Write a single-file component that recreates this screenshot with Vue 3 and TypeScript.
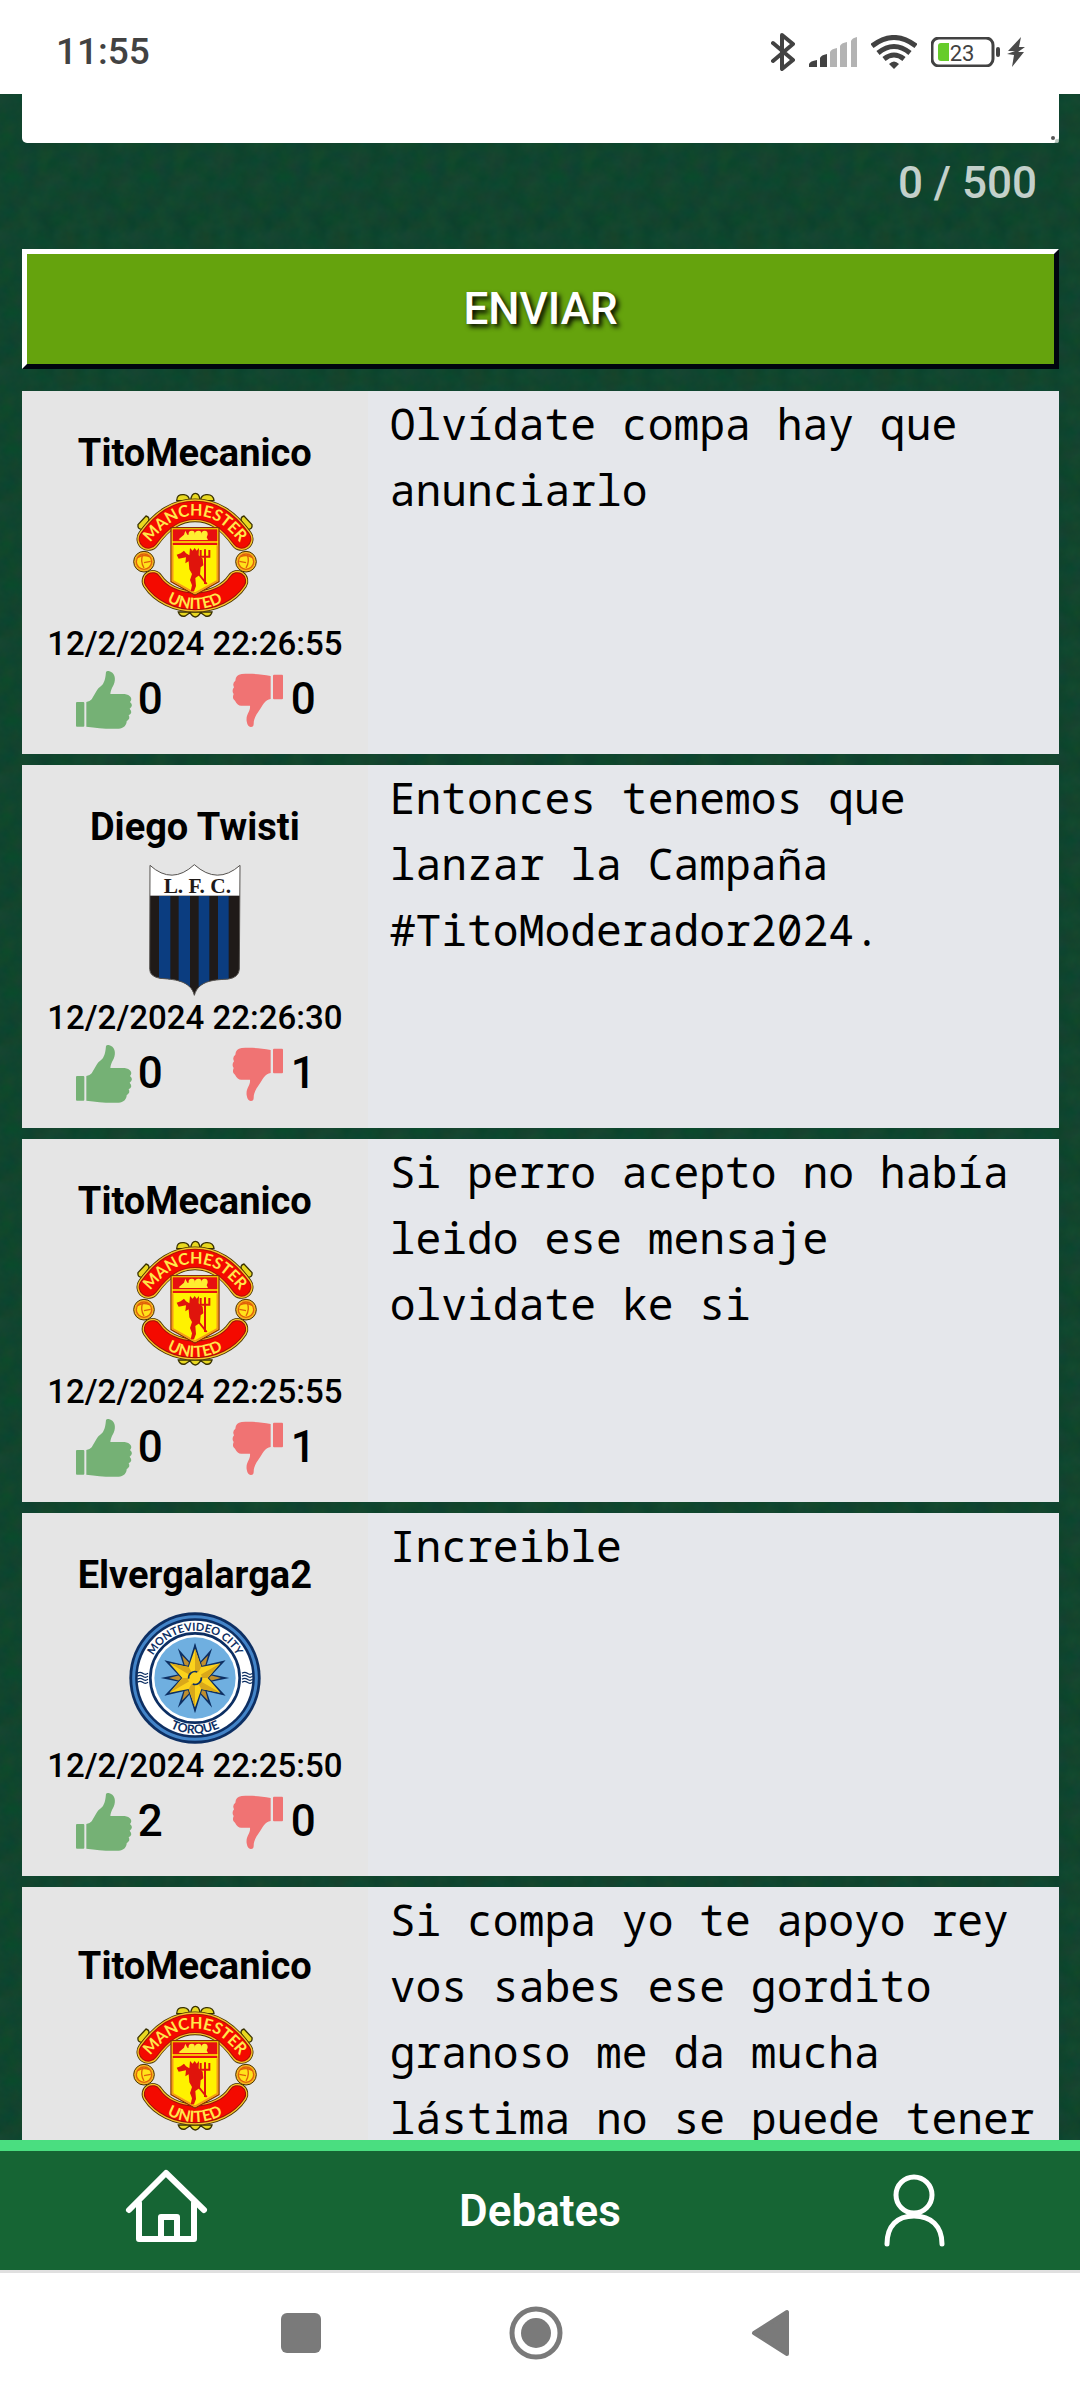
<script setup lang="ts">
import { ref } from 'vue'

interface Comment {
  id: number
  author: string
  crest: 'united' | 'liverpool' | 'torque'
  date: string
  likes: number
  dislikes: number
  text: string
  long?: boolean
}

const maxLength = 500
const draft = ref('')

const comments = ref<Comment[]>([
  { id: 1, author: 'TitoMecanico', crest: 'united', date: '12/2/2024 22:26:55', likes: 0, dislikes: 0, text: 'Olvídate compa hay que anunciarlo' },
  { id: 2, author: 'Diego Twisti', crest: 'liverpool', date: '12/2/2024 22:26:30', likes: 0, dislikes: 1, text: 'Entonces tenemos que lanzar la Campaña #TitoModerador2024.' },
  { id: 3, author: 'TitoMecanico', crest: 'united', date: '12/2/2024 22:25:55', likes: 0, dislikes: 1, text: 'Si perro acepto no había leido ese mensaje olvidate ke si' },
  { id: 4, author: 'Elvergalarga2', crest: 'torque', date: '12/2/2024 22:25:50', likes: 2, dislikes: 0, text: 'Increible' },
  { id: 5, author: 'TitoMecanico', crest: 'united', date: '', likes: 0, dislikes: 0, text: 'Si compa yo te apoyo rey vos sabes ese gordito granoso me da mucha lástima no se puede tener', long: true },
])

const ribbonTop = 'M115 177 C158 118 200 91 255 91 S352 118 395 177'
const ribbonBottom = 'M128 303 C152 340 200 364 255 364 S358 340 382 303'
const shield =
  'M90 46 Q156 106 223 44 Q292 106 360 46 L358 358 Q356 382 326 387 C290 390 236 388 223 436 C212 390 158 388 120 385 Q90 380 89 358Z'

// Points of a star centred on (255, 234), the middle of the Torque badge
function star(count: number, outer: number, inner: number): string {
  const points: string[] = []
  for (let i = 0; i < count * 2; i++) {
    const r = i % 2 === 0 ? outer : inner
    const a = ((i * 180) / count) * (Math.PI / 180)
    points.push(`${(255 + r * Math.sin(a)).toFixed(1)},${(234 - r * Math.cos(a)).toFixed(1)}`)
  }
  return points.join(' ')
}
</script>

<template>
  <div class="screen">
    <svg class="sprites" width="0" height="0" aria-hidden="true">
      <symbol id="like" viewBox="0 0 186 186">
        <rect x="6" y="102" width="25" height="74" rx="3" />
        <path d="M37 102 Q48 101 53 94 L68 68 C76 56 84 54 88 46 Q94 36 96 12 Q98 8 104 9 C122 13 127 32 119 50 Q109 68 109 78 H152 C168 80 178 92 168 102 Q180 112 167 122 Q178 134 164 142 Q170 152 158 160 C158 172 148 182 134 182 C96 184 70 179 37 176Z" />
      </symbol>
      <symbol id="dislike" viewBox="0 0 186 186">
        <rect x="138" y="20" width="30" height="74" rx="3" />
        <path d="M131 24 C100 17 70 17 44 18 Q26 20 25 38 Q15 46 21 58 Q13 68 20 78 Q14 92 24 98 Q32 114 44 113 H69 C71 132 56 138 59 160 Q62 178 72 177 Q80 177 80 168 C80 148 90 138 100 122 C110 108 114 96 131 93Z" />
      </symbol>
    </svg>

    <header class="status">
      <time class="clock">11:55</time>
      <div class="indicators" aria-hidden="true">
        <svg width="24" height="38" viewBox="0 0 24 38" fill="none" stroke="#424242" stroke-width="4" stroke-linejoin="round" stroke-linecap="round">
          <path d="M2 10 L22 27 L11 36 V2 L22 11 L2 28" />
        </svg>
        <svg width="48" height="30" viewBox="0 0 48 30">
          <path d="M0 30 V27 Q1 24 8 23 V30Z M11 30 V21 Q12 18 18 17 V30Z" fill="#424242" />
          <path d="M21 30 V15 Q22 12 28 11 V30Z M31 30 V9 Q32 6 38 5 V30Z M42 30 V4 Q43 1 48 0 V30Z" fill="#b3b3b3" />
        </svg>
        <svg width="46" height="34" viewBox="0 0 46 34" fill="none" stroke="#424242" stroke-width="5">
          <path d="M1 11 Q23 -6 45 11 M7 18 Q23 5 39 18 M13 24 Q23 16 33 24" />
          <path d="M23 34 L18 29 Q23 24 28 29Z" fill="#424242" stroke="none" />
        </svg>
        <svg width="94" height="30" viewBox="0 0 94 30">
          <rect x="1" y="1" width="61" height="28" rx="7" fill="none" stroke="#424242" stroke-width="3" />
          <path d="M10 6 H18 V24 H10 Q7 24 7 21 V9 Q7 6 10 6Z" fill="#66cc2b" />
          <rect x="65" y="10" width="4" height="10" rx="2" fill="#424242" />
          <text x="31" y="24" text-anchor="middle" font-family="Roboto, sans-serif" font-size="22" font-weight="400" fill="#424242">23</text>
          <path d="M90 0 L77 14 H84 L76 17 L83 18 L81 30 L93 15 H87 L94 10 L88 10Z" fill="#4a4a4a" />
        </svg>
      </div>
    </header>

    <main class="feed">
      <form class="composer" @submit.prevent>
        <div class="field">
          <textarea v-model="draft" :maxlength="maxLength" aria-label="Comentario"></textarea>
          <svg class="grip" width="9" height="9" viewBox="0 0 9 9" aria-hidden="true">
            <circle cx="3" cy="4" r="2" fill="#555" />
            <circle cx="7" cy="7" r="2" fill="#b9c9c1" />
          </svg>
        </div>
        <p class="counter">{{ draft.length }} / {{ maxLength }}</p>
        <button class="send" type="submit">ENVIAR</button>
      </form>

      <article v-for="c in comments" :key="c.id" class="comment" :class="{ long: c.long }">
        <aside class="meta">
          <h2>{{ c.author }}</h2>

          <svg v-if="c.crest === 'united'" class="crest" viewBox="57 30 396 396">
            <g fill="#e8d820" stroke="#3a3200" stroke-width="4">
              <path d="M200 62 Q200 42 222 44 Q238 46 238 62Z" />
              <path d="M272 62 Q272 46 288 44 Q310 42 312 62Z" />
              <path d="M242 60 Q245 40 256 40 Q268 40 270 60Z" />
              <path d="M84 134 L108 108 Q122 112 114 126 L96 148 Q82 148 84 134Z" />
              <path d="M426 134 L402 108 Q388 112 396 126 L414 148 Q428 148 426 134Z" />
              <path d="M205 396 Q210 412 226 408 L240 398 Q256 424 272 398 L286 408 Q302 412 306 396Z" />
            </g>
            <g fill="none" stroke-linecap="round">
              <path :d="ribbonTop" stroke="#4a3300" stroke-width="71" />
              <path :d="ribbonTop" stroke="#f6c52a" stroke-width="66" />
              <path :d="ribbonTop" stroke="#b01206" stroke-width="58" />
              <path :d="ribbonTop" stroke="#f40a00" stroke-width="52" />
              <path :d="ribbonBottom" stroke="#4a3300" stroke-width="66" />
              <path :d="ribbonBottom" stroke="#f6c52a" stroke-width="61" />
              <path :d="ribbonBottom" stroke="#a01208" stroke-width="53" />
              <path :d="ribbonBottom" stroke="#f40a00" stroke-width="47" />
            </g>
            <g stroke="#4a3300" stroke-width="3" fill="#f6b422">
              <circle cx="102" cy="245" r="31" />
              <circle cx="408" cy="245" r="31" />
            </g>
            <g fill="#ffe21a" stroke="#e0620a" stroke-width="4">
              <circle cx="102" cy="245" r="23" />
              <circle cx="408" cy="245" r="23" />
              <path fill="none" d="M84 232 Q100 222 118 230 M98 226 Q90 244 102 264 M102 248 L122 244 M426 232 Q410 222 392 230 M412 226 Q420 244 408 264 M408 248 L388 244" />
            </g>
            <path d="M183 143 H327 V305 L255 345 L183 305Z" fill="#fff200" stroke="#8a2c08" stroke-width="4" />
            <path d="M188 148 H322 V184 H188Z M188 188 H322 V195 H188Z" fill="#e81010" />
            <path d="M188 196 V302 L255 340 L322 302 V196" fill="none" stroke="#f59a1a" stroke-width="5" />
            <path d="M206 178 L222 164 L226 152 L232 164 H236 Q234 152 246 152 Q256 152 254 164 Q254 152 266 152 Q276 152 274 164 Q274 152 284 152 Q294 152 293 164 L290 172 L294 180 H210Z" fill="#ffee30" />
            <path d="M240 204 L248 212 L254 204 L260 212 L267 204 L266 226 L278 236 L280 256 L272 262 L270 284 L256 294 L258 318 L252 334 L242 334 L246 316 L240 300 L246 282 L238 268 L236 244 L226 250 L228 232 L206 236 L200 224 L212 220 L222 212 L228 220 L238 226Z" fill="#e0140c" />
            <path d="M272 210 V230 H298 V210 M285 208 V312 M266 282 L290 312" fill="none" stroke="#e0140c" stroke-width="6" />
            <path :id="`top-${c.id}`" d="M109 201 C166 132 200 107 255 107 S344 132 401 201" fill="none" />
            <path :id="`bottom-${c.id}`" d="M118 322 C156 362 200 387 255 387 S354 362 392 322" fill="none" />
            <g font-family="Lato, sans-serif" font-weight="700" fill="#ffe84a" text-anchor="middle">
              <text font-size="48"><textPath :href="`#top-${c.id}`" startOffset="50%">MANCHESTER</textPath></text>
              <text font-size="47"><textPath :href="`#bottom-${c.id}`" startOffset="50%">UNITED</textPath></text>
            </g>
          </svg>

          <svg v-else-if="c.crest === 'liverpool'" class="crest" viewBox="27 42 396 396">
            <clipPath :id="`shield-${c.id}`"><path :d="shield" /></clipPath>
            <g :clip-path="`url(#shield-${c.id})`">
              <rect x="80" y="40" width="290" height="98" fill="#fff" />
              <rect x="80" y="137" width="290" height="305" fill="#1f1a18" />
              <path d="M117 138 H151 V442 H117Z M176 138 H210 V442 H176Z M236 138 H268 V442 H236Z M294 138 H326 V442 H294Z" fill="#0b3d80" />
            </g>
            <path :d="shield" fill="none" stroke="#55524f" stroke-width="3" />
            <text x="232" y="130" text-anchor="middle" font-family="Liberation Serif, serif" font-weight="700" font-size="64" fill="#1f1a18">L. F. C.</text>
          </svg>

          <svg v-else class="crest" viewBox="57 36 396 396">
            <circle cx="255" cy="234" r="197" fill="#0d2f63" />
            <circle cx="255" cy="234" r="184" fill="none" stroke="#4384c8" stroke-width="9" />
            <circle cx="255" cy="234" r="172" fill="#fff" />
            <circle cx="255" cy="234" r="134" fill="#fff" stroke="#0d2f63" stroke-width="8" />
            <circle cx="255" cy="234" r="122" fill="#6fafe0" />
            <polygon :points="star(12, 103, 46)" fill="#0d2f63" />
            <polygon :points="star(12, 78, 40)" fill="#c08f2e" />
            <polygon :points="star(6, 106, 42)" fill="#0d2f63" />
            <polygon :points="star(6, 88, 38)" fill="#fbd21c" />
            <path d="M255 146 L274 201 L255 234Z M331 190 L293 234 L255 234Z M331 278 L274 267 L255 234Z M255 322 L236 267 L255 234Z M179 278 L217 234 L255 234Z M179 190 L236 201 L255 234Z" fill="#d9a81a" />
            <circle cx="255" cy="234" r="21" fill="#fbd21c" />
            <path d="M236 236 A19 19 0 0 1 262 216 M274 232 A19 19 0 0 1 248 252" fill="none" stroke="#0d2f63" stroke-width="5" />
            <path d="M82 220 q8 -6 16 0 t16 0 M82 229 q8 -6 16 0 t16 0 M82 238 q8 -6 16 0 t16 0 M82 247 q8 -6 16 0 t16 0 M396 220 q8 -6 16 0 t16 0 M396 229 q8 -6 16 0 t16 0 M396 238 q8 -6 16 0 t16 0 M396 247 q8 -6 16 0 t16 0" fill="none" stroke="#0d2f63" stroke-width="4" />
            <path :id="`top-${c.id}`" d="M113 234 A142 142 0 0 1 397 234" fill="none" />
            <path :id="`bottom-${c.id}`" d="M88 234 A167 167 0 0 0 422 234" fill="none" />
            <g font-family="Lato, sans-serif" font-weight="700" fill="#0d2f63" text-anchor="middle">
              <text font-size="33"><textPath :href="`#top-${c.id}`" startOffset="50%">MONTEVIDEO CITY</textPath></text>
              <text font-size="37"><textPath :href="`#bottom-${c.id}`" startOffset="50%">TORQUE</textPath></text>
            </g>
          </svg>

          <time class="date">{{ c.date }}</time>
          <div class="votes">
            <button type="button" aria-label="Me gusta" @click="c.likes++">
              <svg class="thumb up"><use href="#like" /></svg>{{ c.likes }}
            </button>
            <button type="button" aria-label="No me gusta" @click="c.dislikes++">
              <svg class="thumb down"><use href="#dislike" /></svg>{{ c.dislikes }}
            </button>
          </div>
        </aside>
        <p class="message">{{ c.text }}</p>
      </article>
    </main>

    <nav class="tabs">
      <a href="#inicio" aria-label="Inicio">
        <svg width="88" height="88" viewBox="0 0 88 88" fill="none" stroke="#fff" stroke-width="6" stroke-linecap="round" stroke-linejoin="round">
          <path d="M7 43 L44 6 L82 43 M17 36 V72 H72 V36 M39 72 V50 H55 V72" />
        </svg>
      </a>
      <a class="current" href="#debates">Debates</a>
      <a href="#perfil" aria-label="Perfil">
        <svg width="88" height="88" viewBox="0 0 88 88" fill="none" stroke="#fff" stroke-width="5" stroke-linecap="round">
          <circle cx="44" cy="28" r="18" />
          <path d="M17 77 C17 59 27 49 44 49 S72 59 72 77" />
        </svg>
      </a>
    </nav>

    <footer class="system">
      <button type="button" aria-label="Recientes">
        <svg width="54" height="54" viewBox="0 0 54 54"><rect x="7" y="7" width="40" height="40" rx="6" fill="#7a7a7a" /></svg>
      </button>
      <button type="button" aria-label="Inicio del sistema">
        <svg width="54" height="54" viewBox="0 0 54 54">
          <circle cx="27" cy="27" r="24" fill="none" stroke="#7a7a7a" stroke-width="5" />
          <circle cx="27" cy="27" r="15" fill="#7a7a7a" />
        </svg>
      </button>
      <button type="button" aria-label="Atrás">
        <svg width="54" height="54" viewBox="0 0 54 54">
          <path d="M10 27 L43 6 V48Z" fill="#7a7a7a" stroke="#7a7a7a" stroke-width="4" stroke-linejoin="round" />
        </svg>
      </button>
    </footer>
  </div>
</template>

<style>
body {
  margin: 0;
}
</style>

<style scoped>
.screen {
  display: flex;
  flex-direction: column;
  height: 100vh;
  overflow: hidden;
  font-family: Roboto, sans-serif;
  font-size: 44px;
  font-weight: 500;
  line-height: 66px;
  color: #000;
  background: #fff;
}
.screen * {
  box-sizing: border-box;
}
.sprites,
svg {
  display: block;
  flex: none;
}
button {
  padding: 0;
  border: 0;
  background: none;
  font: inherit;
  color: inherit;
}

.status {
  display: flex;
  flex: none;
  align-items: center;
  justify-content: space-between;
  height: 94px;
  padding: 9px 55px 0 56px;
}
.clock {
  font-size: 37px;
  color: #424242;
}
.indicators {
  display: flex;
  align-items: center;
  gap: 14px;
}

.feed {
  display: flex;
  flex: 1;
  flex-direction: column;
  gap: 11px;
  min-height: 0;
  padding: 0 21px 0 22px;
  overflow: hidden;
  background-color: #10452e;
  background-image: url("data:image/svg+xml,%3Csvg xmlns='http://www.w3.org/2000/svg' width='136' height='136'%3E%3Cfilter id='n' x='0' y='0' width='100%25' height='100%25' color-interpolation-filters='sRGB'%3E%3CfeTurbulence type='fractalNoise' baseFrequency='.05 .05' numOctaves='4' seed='4' stitchTiles='stitch'/%3E%3CfeColorMatrix values='.08 0 0 0 .025 0 .05 0 0 .245 0 0 .05 0 .155 0 0 0 0 1'/%3E%3C/filter%3E%3Crect width='136' height='136' filter='url(%23n)'/%3E%3C/svg%3E");
}
.composer {
  flex: none;
  padding-bottom: 11px;
}
.field {
  position: relative;
}
textarea {
  display: block;
  width: 100%;
  height: 49px;
  border: 0;
  border-radius: 0 0 5px 5px;
  background: #fff;
  font: inherit;
  resize: none;
  outline: 0;
}
.grip {
  position: absolute;
  right: 0;
  bottom: 0;
}
.counter {
  margin: 0;
  padding: 7px 22px 33px;
  text-align: right;
  color: rgba(255, 255, 255, 0.75);
}
.send {
  display: block;
  width: 100%;
  height: 120px;
  border: 5px solid;
  border-color: #fff #00050f #00050f #fff;
  background: #65a30d;
  color: #fff;
  text-shadow: 3px 3px 5px #000;
}

.comment {
  display: flex;
  flex: none;
  min-height: 363px;
  background: #e5e7eb;
}
.comment.long {
  min-height: 396px;
}
.meta {
  display: flex;
  flex: none;
  flex-direction: column;
  align-items: center;
  justify-content: center;
  width: calc(100% / 3);
  padding: 33px 0 22px;
  background: #e5e5e5;
}
h2 {
  margin: 0;
  padding: 2px 0 9px;
  font-size: 38px;
  font-weight: 700;
  line-height: 55px;
}
.crest {
  width: 132px;
  height: 132px;
}
.date {
  height: 44px;
  font-size: 33px;
  line-height: 44px;
  white-space: nowrap;
}
.votes {
  display: flex;
  gap: 64px;
}
.votes button {
  display: flex;
  align-items: center;
  gap: 2px;
}
.thumb {
  width: 62px;
  height: 62px;
}
.up {
  fill: #75b175;
}
.down {
  fill: #f07373;
}
.message {
  flex: 1;
  min-width: 0;
  margin: 0;
  padding-left: 22px;
  font-family: "Droid Sans Mono", "Noto Sans Mono", "DejaVu Sans Mono", monospace;
  font-size: 43px;
  font-weight: 400;
}

.tabs {
  display: flex;
  flex: none;
  align-items: center;
  justify-content: space-between;
  height: 130px;
  padding: 0 122px;
  border-top: 11px solid #4ade80;
  background: #166534;
}
.tabs a {
  color: #fff;
  text-decoration: none;
}
.tabs .current {
  font-weight: 600;
}

.system {
  display: flex;
  flex: none;
  align-items: center;
  justify-content: center;
  gap: 181px;
  height: 130px;
  padding: 0 8px 8px 0;
  border-top: 3px solid #e0e0e0;
}
</style>
